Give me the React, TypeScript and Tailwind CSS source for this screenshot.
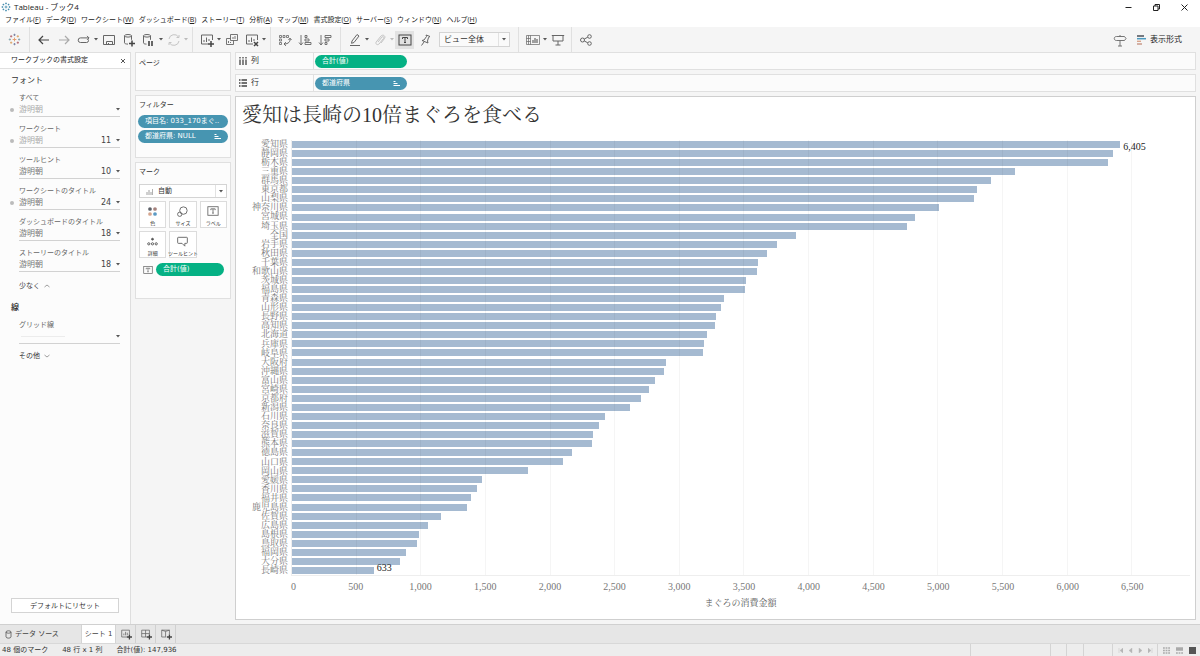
import { FC, ReactNode } from "react";
import clsx from "clsx";

const AXIS_MAX = 6945;

const prefectures: [string, number][] = [
  ["愛知県", 6405],
  ["静岡県", 6350],
  ["栃木県", 6310],
  ["三重県", 5590],
  ["群馬県", 5405],
  ["東京都", 5298],
  ["山梨県", 5275],
  ["神奈川県", 5004],
  ["宮城県", 4818],
  ["埼玉県", 4756],
  ["全国", 3898],
  ["岩手県", 3751],
  ["秋田県", 3674],
  ["千葉県", 3604],
  ["和歌山県", 3596],
  ["茨城県", 3511],
  ["福島県", 3503],
  ["青森県", 3341],
  ["山形県", 3314],
  ["長野県", 3279],
  ["高知県", 3271],
  ["北海道", 3210],
  ["兵庫県", 3186],
  ["岐阜県", 3175],
  ["大阪府", 2892],
  ["沖縄県", 2877],
  ["富山県", 2807],
  ["宮崎県", 2761],
  ["京都府", 2699],
  ["新潟県", 2614],
  ["石川県", 2421],
  ["奈良県", 2378],
  ["滋賀県", 2328],
  ["熊本県", 2320],
  ["徳島県", 2165],
  ["山口県", 2096],
  ["岡山県", 1825],
  ["愛媛県", 1473],
  ["香川県", 1431],
  ["福井県", 1384],
  ["鹿児島県", 1353],
  ["佐賀県", 1152],
  ["広島県", 1048],
  ["島根県", 986],
  ["鳥取県", 970],
  ["福岡県", 878],
  ["大分県", 839],
  ["長崎県", 633],
];

const ticks = Array.from({ length: 13 }, (_, i) => (i + 1) * 500);

const menus = [
  ["ファイル", "F"],
  ["データ", "D"],
  ["ワークシート", "W"],
  ["ダッシュボード", "B"],
  ["ストーリー", "T"],
  ["分析", "A"],
  ["マップ", "M"],
  ["書式設定", "O"],
  ["サーバー", "S"],
  ["ウィンドウ", "N"],
  ["ヘルプ", "H"],
];

const fontFields = [
  { id: "all", label: "すべて", dot: true, muted: true },
  { id: "sheet", label: "ワークシート", dot: true, muted: true, size: "11" },
  { id: "tooltip", label: "ツールヒント", size: "10" },
  { id: "sheet-title", label: "ワークシートのタイトル", dot: true, size: "24" },
  { id: "dash-title", label: "ダッシュボードのタイトル", size: "18" },
  { id: "story-title", label: "ストーリーのタイトル", size: "18" },
];

interface IconProps {
  children: ReactNode;
  className?: string;
}

const Icon: FC<IconProps> = ({ children, className = "size-[14px]" }) => (
  <svg
    viewBox="0 0 14 14"
    fill="none"
    stroke="currentColor"
    className={clsx("shrink-0", className)}
    aria-hidden="true"
  >
    {children}
  </svg>
);

const Caret: FC<{ className?: string }> = ({ className = "text-[#555]" }) => (
  <svg viewBox="0 0 4 3" className={clsx("h-[3px] w-1 shrink-0", className)} aria-hidden="true">
    <path d="M0 0h4L2 2.6z" fill="currentColor" />
  </svg>
);

const Logo: FC<{ blue?: boolean }> = ({ blue }) => (
  <Icon className={blue ? "size-[10px]" : "size-[13px]"}>
    <path d="M7 5v4M5 7h4" stroke={blue ? "#2f7fa5" : "#e59a6a"} />
    <path d="M7 .8v2.4M5.8 2h2.4M7 10.8v2.4M5.8 12h2.4" stroke={blue ? "#2f7fa5" : "#7b83a3"} />
    <path d="M.8 7h2.4M2 5.8v2.4M10.8 7h2.4M12 5.8v2.4" stroke={blue ? "#2f7fa5" : "#86a5b0"} />
    <path d="M3.4 2.4v2.4M2.2 3.6h2.4M10.6 9.2v2.4M9.4 10.4h2.4" stroke={blue ? "#2f7fa5" : "#b5676f"} />
    <path d="M10.6 2.4v2.4M9.4 3.6h2.4M3.4 9.2v2.4M2.2 10.4h2.4" stroke={blue ? "#2f7fa5" : "#dba468"} />
  </Icon>
);

const SortGlyph = () => (
  <svg viewBox="0 0 7 7" className="size-[7px] shrink-0" aria-hidden="true">
    <path d="M.5 1.500h2M.5 3.500h4M.5 5.500h6.500" stroke="white" />
  </svg>
);

const LabelGlyph: FC<{ className?: string }> = ({ className }) => (
  <Icon className={className}>
    <rect x="1" y="2" width="12" height="10" />
    <path d="M4.500 6V4.500h5V6M7 4.500v5M6 9.500h2" />
  </Icon>
);

interface ToolProps {
  name: string;
  children: ReactNode;
  className?: string;
  active?: boolean;
}

const Tool: FC<ToolProps> = ({ name, children, className = "text-[#666]", active }) => (
  <button
    type="button"
    aria-label={name}
    className={clsx(
      "flex h-[18px] w-[19px] items-center justify-center",
      active && "bg-[#e2e2e2]",
      className,
    )}
  >
    {children}
  </button>
);

const Divider = () => <div className="w-px self-stretch bg-[#e0e0e0]" />;

const Toolbar = () => (
  <div className="flex h-[25px] shrink-0 items-center bg-[#f5f5f5]">
    <div className="flex w-[29px] justify-center">
      <Logo />
    </div>
    <Divider />
    <div className="flex items-center gap-px px-1">
      <Tool name="戻る" className="text-[#444]">
        <Icon><path d="M12 7H2M6 3 2 7l4 4" strokeWidth="1.2" /></Icon>
      </Tool>
      <Tool name="進む" className="text-[#aaa]">
        <Icon><path d="M2 7h10M8 3l4 4-4 4" strokeWidth="1.2" /></Icon>
      </Tool>
      <Tool name="やり直し">
        <Icon><path d="M11.500 6.500v1a2 2 0 0 1-2 2h-6a2.300 2.300 0 0 1 0-4.600H12M10 2.900l2 2-2 2" /></Icon>
      </Tool>
      <Caret />
      <Tool name="保存">
        <Icon><path d="M1.500 2.500h11v9h-11zM4.500 11.500v-3h6v3M6.500 10v1.500" /></Icon>
      </Tool>
      <Tool name="新しいデータソース">
        <Icon>
          <ellipse cx="6" cy="2.800" rx="3.500" ry="1.300" />
          <path d="M2.500 2.800v7c0 .8 1.500 1.300 3.500 1.300M9.500 2.800v4" />
          <path d="M10 7.500v6M7 10.500h6" stroke="#444" strokeWidth="1.500" />
        </Icon>
      </Tool>
      <Tool name="自動更新の一時停止">
        <Icon>
          <ellipse cx="5" cy="2.800" rx="3.500" ry="1.300" />
          <path d="M1.500 2.800v7c0 .8 1 1.300 3 1.300M8.500 2.800v4" />
          <path d="M7 8v5M10 8v5" stroke="#444" strokeWidth="1.600" />
        </Icon>
      </Tool>
      <Caret />
      <Tool name="更新" className="text-[#c4c4c4]">
        <Icon><path d="M2 6a5.200 5.200 0 0 1 9.500-2M12 8a5.200 5.200 0 0 1-9.500 2M9.500 4.500h2.500V2M4.500 9.500H2V12" /></Icon>
      </Tool>
      <Caret className="text-[#bbb]" />
    </div>
    <Divider />
    <div className="flex items-center gap-px px-1">
      <Tool name="新しいワークシート">
        <Icon>
          <path d="M8 11H1.500V2h11v5M4 9V7M6.500 9V4.500M9 8V6" />
          <path d="M11 8v6M8 11h6" stroke="#444" strokeWidth="1.500" />
        </Icon>
      </Tool>
      <Caret />
      <Tool name="複製">
        <Icon><path d="M5.500 1.500h7v6h-7zM5.500 5.500h-4v6h7v-4M8 6V4M10 6V3M3.500 10V8M5.500 10V9" strokeWidth=".9" /></Icon>
      </Tool>
      <Tool name="シートのクリア">
        <Icon>
          <path d="M8 11H1.500V2h11v5M4 9V7M6.500 9V4.500M9 8V6" />
          <path d="m9 9 4 4M13 9l-4 4" stroke="#444" strokeWidth="1.500" />
        </Icon>
      </Tool>
      <Caret />
    </div>
    <Divider />
    <div className="flex items-center gap-px pr-1.5 pl-1">
      <Tool name="行と列の交換">
        <Icon>
          <path d="M1.500 2.500h2v2h-2zM5 2.500h2v2H5zM8.500 2.500h2v2h-2zM1.500 6h2v2h-2zM1.500 9.500h2v2h-2z" strokeWidth=".8" />
          <path d="M12 5.500c.5 3-1.500 5.500-6 5.500M10.500 7 12 5.200 13.500 7M8 9.200 6 11l2 1.800" />
        </Icon>
      </Tool>
      <Tool name="昇順で並べ替え">
        <Icon><path d="M3 2v10M1 9.500 3 12l2-2.500M7 2.500h2v2H7zM7 6h4v2H7zM7 9.500h6v2H7z" strokeWidth=".9" /></Icon>
      </Tool>
      <Tool name="降順で並べ替え">
        <Icon><path d="M3 2v10M1 9.500 3 12l2-2.500M7 2.500h6v2H7zM7 6h4v2H7zM7 9.500h2v2H7z" strokeWidth=".9" /></Icon>
      </Tool>
    </div>
    <Divider />
    <div className="flex items-center gap-px pr-2 pl-1">
      <Tool name="ハイライト">
        <Icon><path d="m4 8 5-6.500 2 1.500-5 6.500-2.500.8zM2 12.500h10" /></Icon>
      </Tool>
      <Caret />
      <Tool name="グループ" className="text-[#c4c4c4]">
        <Icon><path d="m5 9 4-5c1-1 2.500 0 1.500 1.500L6 11c-1.500 1.500-4 0-2.800-2L8 3c2-2 5 0 3.500 2.500L8 10" /></Icon>
      </Tool>
      <Caret className="text-[#bbb]" />
      <Tool name="マークラベルの表示" className="text-[#444]" active>
        <LabelGlyph />
      </Tool>
      <Tool name="軸の修正">
        <Icon><path d="M8 2 12 3.500l-1.500 1-1 3.500.5 2L4 7.500 6 7l2.500-3.500zM6 9l-2.500 3.500" /></Icon>
      </Tool>
      <div className="relative ml-1 flex items-center">
        <select
          aria-label="表示サイズ"
          className="h-[15px] w-[71px] appearance-none border border-[#d4d4d4] bg-[#fafafa] pl-1 text-[8px] leading-[12px] text-[#333]"
        >
          <option>ビュー全体</option>
        </select>
        <span className="pointer-events-none absolute right-1">
          <Caret />
        </span>
        <span className="pointer-events-none absolute right-[11px] h-[13px] w-px bg-[#e2e2e2]" />
      </div>
    </div>
    <Divider />
    <div className="flex items-center gap-px px-1">
      <Tool name="カードの表示/非表示">
        <Icon>
          <path d="M.5 2.500h13v9H.5zM4.500 2.500v9M.5 5.500h4M.5 8.500h4M2.500 2.500v9" strokeWidth=".7" />
          <path d="M7 10V7M9 10V5M11 10V6" strokeWidth="1.200" />
        </Icon>
      </Tool>
      <Caret />
      <Tool name="プレゼンテーションモード">
        <Icon><path d="M.8 2.500h12.400M2 2.500v5.500h10V2.500M7 8v4M4.500 12h5" /></Icon>
      </Tool>
    </div>
    <Divider />
    <div className="flex items-center px-1">
      <Tool name="共有">
        <Icon>
          <circle cx="3.500" cy="7" r="2" />
          <circle cx="10.500" cy="3.500" r="1.800" />
          <circle cx="10.500" cy="10.500" r="1.800" />
          <path d="m5.300 6 3.500-1.800M5.300 8l3.500 1.800" />
        </Icon>
      </Tool>
    </div>
    <div className="ml-auto flex items-center gap-2 pr-[18px]">
      <Tool name="データガイド">
        <Icon><path d="M3.500 3.500h8L13 5.500l-1.500 2h-8c-3 0-3-4 0-4zM7 2v1.500M7 7.500V13M5 13h4" strokeWidth=".9" /></Icon>
      </Tool>
      <button type="button" className="flex items-center gap-1 text-[8px] text-[#222]">
        <svg viewBox="0 0 9 10" className="h-[10px] w-[9px]" aria-hidden="true">
          <path d="M0 1h7" stroke="#4a4f58" strokeWidth="1.500" />
          <path d="M0 3.700h9" stroke="#4b9ac0" strokeWidth="1.500" />
          <path d="M0 6.300h4" stroke="#d9a58c" strokeWidth="1.400" />
          <path d="M0 9h5" stroke="#c69483" strokeWidth="1.400" />
        </svg>
        表示形式
      </button>
    </div>
  </div>
);

const TitleBar = () => (
  <header className="shrink-0">
    <div className="flex h-[14px] items-center pl-[1px] text-[8px] text-[#222]">
      <Logo blue />
      <h1 className="ml-[3px] font-['Open_Sans','Noto_Sans_CJK_JP',sans-serif]">Tableau - ブック4</h1>
      <div className="mr-[11px] ml-auto flex gap-[19px]">
        <button type="button" aria-label="最小化">
          <svg viewBox="0 0 9 9" className="size-[9px]"><path d="M1.500 4.500h6" stroke="#222" /></svg>
        </button>
        <button type="button" aria-label="元に戻す">
          <svg viewBox="0 0 9 9" className="size-[9px]" fill="none" stroke="#222">
            <path d="M1.500 3h4.500v4.500H1.500zM3 3V1.500h4.500V6H6" />
          </svg>
        </button>
        <button type="button" aria-label="閉じる">
          <svg viewBox="0 0 9 9" className="size-[9px]"><path d="m1.500 1.500 6 6M7.500 1.500l-6 6" stroke="#222" /></svg>
        </button>
      </div>
    </div>
    <nav className="flex h-[13px] items-center gap-[5px] pl-[5px] text-[7px] text-[#222]">
      {menus.map(([label, key]) => (
        <button key={key} type="button" className="whitespace-nowrap font-['Open_Sans','Noto_Sans_CJK_JP',sans-serif]">
          {label}(<span className="underline">{key}</span>)
        </button>
      ))}
    </nav>
  </header>
);

const FormatPanel = () => (
  <aside className="flex w-[131px] shrink-0 flex-col border-r border-[#dedede] bg-[#fcfcfc] text-[7px] text-[#666]">
    <div className="flex h-[17px] items-center justify-between border-y border-[#e0e0e0] bg-white pr-1 pl-[11px]">
      <h2 className="text-[7px] text-[#222]">ワークブックの書式設定</h2>
      <button type="button" aria-label="パネルを閉じる">
        <svg viewBox="0 0 6 6" className="size-[6px]"><path d="m1 1 4 4M5 1 1 5" stroke="#444" strokeWidth=".9" /></svg>
      </button>
    </div>
    <h3 className="mt-[6px] pl-[11px] text-[8px] leading-[12px] text-[#333]">フォント</h3>
    <div className="mt-[6px] flex flex-col gap-[7px] pr-[10px] pl-[10px]">
      {fontFields.map((field) => (
        <div key={field.id} className="flex flex-col">
          <label htmlFor={field.id} className="pl-[9px] leading-[10px]">
            {field.label}
          </label>
          <div className="flex items-center gap-[5px]">
            <span className={clsx("size-1 rounded-full", field.dot && "bg-[#bbb]")} />
            <div className="relative flex h-[14px] flex-1 items-center border-b border-[#d2d2d2]">
              <select
                id={field.id}
                className={clsx(
                  "flex-1 appearance-none bg-transparent text-[8px]",
                  field.muted ? "text-[#aaa]" : "text-[#777]",
                )}
              >
                <option>游明朝</option>
              </select>
              {field.size && (
                <select
                  aria-label={`${field.label}のサイズ`}
                  className="mr-2 appearance-none bg-transparent text-[8px] text-[#444]"
                >
                  <option>{field.size}</option>
                </select>
              )}
              <span className="pointer-events-none absolute right-0 flex">
                <Caret />
              </span>
            </div>
          </div>
        </div>
      ))}
    </div>
    <button type="button" className="mt-2 ml-[19px] flex items-center gap-1 leading-[12px] text-[#444]">
      少なく
      <svg viewBox="0 0 6 4" className="h-1 w-[6px]" fill="none"><path d="m.5 3 2.500-2 2.500 2" stroke="#888" strokeWidth=".8" /></svg>
    </button>
    <h3 className="mt-[10px] pl-[11px] text-[8px] leading-[12px] font-medium text-[#222]">線</h3>
    <div className="mt-[6px] flex flex-col pr-[10px] pl-[19px]">
      <label htmlFor="gridline" className="leading-[10px]">
        グリッド線
      </label>
      <div className="relative flex h-[14px] items-center border-b border-[#d2d2d2]">
        <select id="gridline" className="absolute inset-0 appearance-none bg-transparent">
          <option aria-label="実線" />
        </select>
        <span className="ml-0.5 h-px w-11 bg-[#ececec]" />
        <span className="pointer-events-none ml-auto">
          <Caret />
        </span>
      </div>
    </div>
    <button type="button" className="mt-[6px] ml-[19px] flex items-center gap-1 leading-[12px] text-[#333]">
      その他
      <svg viewBox="0 0 6 4" className="h-1 w-[6px]" fill="none"><path d="m.5 1 2.500 2 2.500-2" stroke="#888" strokeWidth=".8" /></svg>
    </button>
    <button
      type="button"
      className="mx-[11px] mt-auto mb-[11px] h-[15px] border border-[#d4d4d4] bg-white text-[7px] leading-[12px] text-[#333]"
    >
      デフォルトにリセット
    </button>
  </aside>
);

interface PillProps {
  label: string;
  sorted?: boolean;
  green?: boolean;
  className?: string;
}

const Pill: FC<PillProps> = ({ label, sorted, green, className }) => (
  <button
    type="button"
    className={clsx(
      "flex h-[13px] items-center justify-between rounded-full px-[7px] text-[7px] whitespace-nowrap text-white",
      green ? "bg-[#05b184]" : "bg-[#4795b1]",
      className,
    )}
  >
    {label}
    {sorted && <SortGlyph />}
  </button>
);

const MarkButton: FC<{ label: string; children: ReactNode }> = ({ label, children }) => (
  <button
    type="button"
    className="flex h-[27px] min-w-0 flex-col items-center justify-between border border-[#dcdcdc] bg-white pt-[3px] text-[5px] leading-[8px] whitespace-nowrap text-[#333]"
  >
    {children}
    {label}
  </button>
);

const Shelves = () => (
  <section className="flex w-24 shrink-0 flex-col gap-1 text-[7px] text-[#333]">
    <div className="h-[39px] border border-[#e0e0e0] bg-[#fcfcfc] px-[3px] pt-1">
      <h2 className="leading-[12px]">ページ</h2>
    </div>
    <div className="flex h-[63px] flex-col border border-[#e0e0e0] bg-[#fcfcfc] px-0.5 pt-[3px]">
      <h2 className="pl-px leading-[12px]">フィルター</h2>
      <div className="mt-1 flex flex-col gap-0.5">
        <Pill label="項目名: 033_170まぐ.." />
        <Pill label="都道府県: NULL" sorted />
      </div>
    </div>
    <div className="flex h-[137px] flex-col border border-[#e0e0e0] bg-[#fcfcfc] px-[3px] pt-[3px]">
      <h2 className="leading-[12px]">マーク</h2>
      <div className="relative mt-[6px] flex items-center">
        <select
          aria-label="マークの種類"
          className="h-[14px] w-full appearance-none border border-[#d4d4d4] bg-white pl-[18px] text-[7px] leading-[11px] text-[#333]"
        >
          <option>自動</option>
        </select>
        <span className="pointer-events-none absolute inset-x-0 flex items-center justify-between pr-1 pl-[7px]">
          <svg viewBox="0 0 7 7" className="size-[7px]"><path d="M1 7V4M3 7V2M5 7V4M6.700 7V1" stroke="#888" strokeWidth=".8" /></svg>
          <Caret />
        </span>
        <span className="pointer-events-none absolute right-[11px] h-3 w-px bg-[#e2e2e2]" />
      </div>
      <div className="mt-[3px] grid grid-cols-3 gap-[3px]">
        <MarkButton label="色">
          <Icon className="size-[13px]">
            <g stroke="none">
              <circle cx="4.300" cy="4.300" r="2" fill="#5c6068" />
              <circle cx="9.700" cy="4.300" r="2" fill="#a5817c" />
              <circle cx="4.300" cy="9.700" r="2" fill="#d5a58e" />
              <circle cx="9.700" cy="9.700" r="2" fill="#5b9ac4" />
            </g>
          </Icon>
        </MarkButton>
        <MarkButton label="サイズ">
          <Icon className="size-[13px] text-[#666]">
            <circle cx="8" cy="6" r="4" />
            <circle cx="4" cy="10" r="2.300" />
          </Icon>
        </MarkButton>
        <MarkButton label="ラベル">
          <LabelGlyph className="size-[12px] text-[#666]" />
        </MarkButton>
        <MarkButton label="詳細">
          <Icon className="size-[13px] text-[#555]">
            <circle cx="7" cy="4.500" r="1" fill="currentColor" />
            <circle cx="3" cy="9.500" r="1.200" />
            <circle cx="7" cy="9.500" r="1.200" />
            <circle cx="11" cy="9.500" r="1.200" />
          </Icon>
        </MarkButton>
        <MarkButton label="ツールヒント">
          <Icon className="size-[13px] text-[#666]">
            <path d="M2.500 2.500h9q.7 0 .7.700v5q0 .8-.7.800H9.500v3L6.500 9h-4q-.7 0-.7-.8v-5q0-.7.700-.7z" />
          </Icon>
        </MarkButton>
      </div>
      <div className="mt-[5px] flex items-center gap-[3px] pr-[3px] pl-1">
        <LabelGlyph className="size-[10px] text-[#666]" />
        <Pill label="合計(値)" green className="flex-1" />
      </div>
    </div>
  </section>
);

const ShelfRow: FC<{ label: string; icon: ReactNode; children: ReactNode }> = ({ label, icon, children }) => (
  <div className="flex h-[18px] items-stretch border border-[#e0e0e0] bg-[#fbfbfb]">
    <div className="flex w-[78px] items-center gap-1 border-r border-[#e0e0e0] pl-[3px] text-[8px] text-[#333]">
      {icon}
      {label}
    </div>
    <div className="flex items-center pl-px">{children}</div>
  </div>
);

const BarChart = () => (
  <section className="flex flex-1 flex-col border border-[#cfcfcf] bg-white pr-[5px] font-['Liberation_Serif','Noto_Serif_CJK_JP','Noto_Sans_CJK_JP',serif] text-[#777]">
    <h2 className="mt-[3px] pl-[6px] text-[20px] leading-[30px] text-[#333]">
      愛知は長崎の10倍まぐろを食べる
    </h2>
    <div className="mt-[10px] flex">
      <ul className="flex h-[436px] w-[52px] flex-col text-right text-[9px]">
        {prefectures.map(([name]) => (
          <li key={name} className="flex min-h-0 flex-1 items-center justify-end whitespace-nowrap">
            {name}
          </li>
        ))}
      </ul>
      <div className="ml-[3px] flex-1">
        <div className="relative flex h-[436px] flex-col border-b border-l border-[#eee]">
          {prefectures.map(([name, value], i) => (
            <div key={name} className="flex min-h-0 flex-1 items-center">
              <div
                className="h-[7px] bg-[#a5bad1]"
                style={{ width: `${(value / AXIS_MAX) * 100}%` }}
              />
              {i === 0 && <span className="mt-1 ml-[3px] text-[10px] leading-[8px] text-[#222]">6,405</span>}
              {i === prefectures.length - 1 && (
                <span className="mb-1 ml-[3px] text-[10px] leading-[8px] text-[#222]">633</span>
              )}
            </div>
          ))}
          <div className="pointer-events-none absolute inset-0 flex">
            {ticks.map((tick) => (
              <div
                key={tick}
                className="border-r border-black/4"
                style={{ width: `${(500 / AXIS_MAX) * 100}%` }}
              />
            ))}
          </div>
        </div>
        <div className="mt-1 flex text-[10px] leading-[14px]">
          <span style={{ width: `${(250 / AXIS_MAX) * 100}%` }}>0</span>
          {ticks.map((tick) => (
            <span key={tick} className="text-center" style={{ width: `${(500 / AXIS_MAX) * 100}%` }}>
              {tick.toLocaleString("en-US")}
            </span>
          ))}
        </div>
        <p className="mt-[3px] text-center text-[9px] leading-[12px] text-[#555]">まぐろの消費金額</p>
      </div>
    </div>
  </section>
);

const SheetTabs = () => (
  <div className="flex h-[19px] shrink-0 items-stretch border-t border-[#d0d0d0] bg-[#e6e6e6] text-[7px] text-[#444]">
    <button type="button" className="flex w-[81px] items-center gap-[3px] pl-[5px]">
      <svg viewBox="0 0 7 9" className="h-[9px] w-[7px]" fill="none" stroke="#555" strokeWidth=".8">
        <ellipse cx="3.500" cy="2" rx="2.500" ry="1.200" />
        <path d="M1 2v5c0 1.500 5 1.500 5 0V2" />
      </svg>
      データ ソース
    </button>
    <button type="button" className="w-[35px] border-x border-[#d4d4d4] bg-white whitespace-nowrap">
      シート 1
    </button>
    {[
      ["新しいワークシート", "M8 10.500H2v-8h9v5M4.500 8.500v-2M6.500 8.500v-4M8.500 8.500v-3"],
      ["新しいダッシュボード", "M8 10.500H2v-8h9v5M6.500 2.500v8M2 6.500h9"],
      ["新しいストーリー", "M6.500 11V4L2 2.500v8h4M6.500 4 11 2.500v5M2 2.500h9"],
    ].map(([name, d]) => (
      <button
        key={name}
        type="button"
        aria-label={name}
        className="flex w-5 items-center justify-center border-r border-[#d0d0d0] text-[#666]"
      >
        <Icon className="size-[12px]">
          <path d={d} strokeWidth=".9" />
          <path d="M11 7.500v6M8 10.500h6" stroke="#444" strokeWidth="1.500" />
        </Icon>
      </button>
    ))}
  </div>
);

const StatusBar = () => (
  <footer className="flex h-[13px] shrink-0 items-stretch border-t border-[#d8d8d8] bg-[#ededed] text-[7px] leading-[12px] text-[#333]">
    <div className="flex gap-[14px] pl-[2px] whitespace-nowrap">
      <span>48 個のマーク</span>
      <span>48 行 x 1 列</span>
      <span>合計(値): 147,936</span>
    </div>
    <div className="ml-auto flex">
      <div className="w-20 border-l border-[#d4d4d4]" />
      <div className="w-4 border-l border-[#d4d4d4]" />
      <div className="w-[17px] border-l border-[#d4d4d4]" />
      <div className="w-[29px] border-l border-[#d4d4d4]" />
      <div className="flex w-[45px] items-center justify-center gap-[5px] border-l border-[#d4d4d4]">
        {["M1 0v5M5 0 2 2.500l3 2.500z", "M4 0 1 2.500 4 5z", "M1 0l3 2.500L1 5z", "M4 0v5M0 0l3 2.500L0 5z"].map((d) => (
          <svg key={d} viewBox="0 0 5 5" className="size-[5px]" aria-hidden="true">
            <path d={d} fill="#b5b5b5" stroke="#b5b5b5" strokeWidth=".4" />
          </svg>
        ))}
      </div>
      <div className="flex items-center gap-[6px] border-l border-[#d4d4d4] pr-1 pl-[5px]">
        <svg viewBox="0 0 7 7" className="size-[7px]" aria-hidden="true">
          <path d="M0 1h7M0 3.500h7M0 6h7" stroke="#aaa" strokeWidth="1.600" strokeDasharray="1.800 .8" />
        </svg>
        <svg viewBox="0 0 7 7" className="size-[7px]" aria-hidden="true">
          <path d="M0 2h7" stroke="#aaa" strokeWidth="3.500" />
          <path d="M0 6h7" stroke="#aaa" strokeWidth="1.600" strokeDasharray="1.800 .8" />
        </svg>
        <div className="size-[7px] bg-[#555]" />
      </div>
    </div>
  </footer>
);

const App = () => (
  <div className="flex min-h-screen flex-col bg-white font-['DejaVu_Sans','Noto_Sans_CJK_JP',sans-serif]">
    <TitleBar />
    <Toolbar />
    <main className="flex flex-1 gap-1 bg-[#f5f5f5] pr-1">
      <FormatPanel />
      <Shelves />
      <div className="flex min-w-0 flex-1 flex-col gap-1 pb-1">
        <ShelfRow
          label="列"
          icon={
            <svg viewBox="0 0 8 8" className="size-2" aria-hidden="true">
              <path d="M1 0v1.500M4 0v1.500M7 0v1.500M1 2.500V8M4 2.500V8M7 2.500V8" stroke="#444" strokeWidth="1.300" />
            </svg>
          }
        >
          <Pill label="合計(値)" green className="w-[92px]" />
        </ShelfRow>
        <ShelfRow
          label="行"
          icon={
            <svg viewBox="0 0 8 8" className="size-2" aria-hidden="true">
              <path d="M0 1h1.500M0 4h1.500M0 7h1.500M2.500 1H8M2.500 4H8M2.500 7H8" stroke="#444" strokeWidth="1.300" />
            </svg>
          }
        >
          <Pill label="都道府県" sorted className="w-[92px]" />
        </ShelfRow>
        <BarChart />
      </div>
    </main>
    <SheetTabs />
    <StatusBar />
  </div>
);

export default App;
